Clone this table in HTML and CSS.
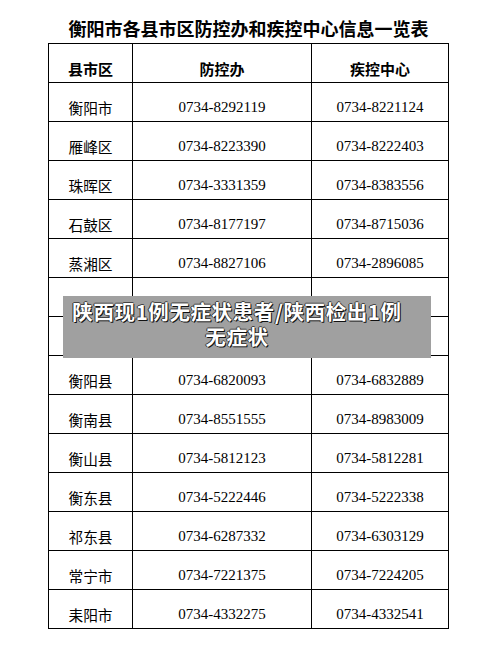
FILE: index.html
```html
<!DOCTYPE html>
<html lang="zh-CN">
<head>
<meta charset="utf-8">
<title>衡阳市各县市区防控办和疾控中心信息一览表</title>
<link rel="stylesheet" href="styles.css">
</head>
<body>
<main class="page">
  <h1 class="title">衡阳市各县市区防控办和疾控中心信息一览表</h1>
  <div class="sheet">
    <div class="grid">
      <div class="cell head">县市区</div><div class="cell head">防控办</div><div class="cell head">疾控中心</div>
      <div class="cell name">衡阳市</div><div class="cell num">0734-8292119</div><div class="cell num">0734-8221124</div>
      <div class="cell name">雁峰区</div><div class="cell num">0734-8223390</div><div class="cell num">0734-8222403</div>
      <div class="cell name">珠晖区</div><div class="cell num">0734-3331359</div><div class="cell num">0734-8383556</div>
      <div class="cell name">石鼓区</div><div class="cell num">0734-8177197</div><div class="cell num">0734-8715036</div>
      <div class="cell name">蒸湘区</div><div class="cell num">0734-8827106</div><div class="cell num">0734-2896085</div>
      <div class="cell name">南岳区</div><div class="cell num"></div><div class="cell num"></div>
      <div class="cell name"></div><div class="cell num"></div><div class="cell num"></div>
      <div class="cell name">衡阳县</div><div class="cell num">0734-6820093</div><div class="cell num">0734-6832889</div>
      <div class="cell name">衡南县</div><div class="cell num">0734-8551555</div><div class="cell num">0734-8983009</div>
      <div class="cell name">衡山县</div><div class="cell num">0734-5812123</div><div class="cell num">0734-5812281</div>
      <div class="cell name">衡东县</div><div class="cell num">0734-5222446</div><div class="cell num">0734-5222338</div>
      <div class="cell name">祁东县</div><div class="cell num">0734-6287332</div><div class="cell num">0734-6303129</div>
      <div class="cell name">常宁市</div><div class="cell num">0734-7221375</div><div class="cell num">0734-7224205</div>
      <div class="cell name">耒阳市</div><div class="cell num">0734-4332275</div><div class="cell num">0734-4332541</div>
    </div>
    <div class="banner">陕西现1例无症状患者/陕西检出1例<br>无症状</div>
  </div>
</main>
</body>
</html>
```

FILE: styles.css
```css
html, body {
  margin: 0;
  padding: 0;
  background: #ffffff;
}

.page {
  width: 497px;
  padding-top: 15px;
  font-family: "Noto Sans CJK SC", "Noto Sans", sans-serif;
  color: #000;
}

.title {
  margin: 0 0 2px;
  height: 26px;
  line-height: 26px;
  font-size: 18px;
  font-weight: 700;
  text-align: center;
}

.sheet {
  position: relative;
  width: 401px;
  margin: 0 auto;
}

.grid {
  display: grid;
  grid-template-columns: 84px 179px 137px;
  grid-auto-rows: 39px;
  border-top: 1px solid #000;
  border-left: 1px solid #000;
}

.cell {
  border-right: 1px solid #000;
  border-bottom: 1px solid #000;
  padding-top: 11px;
  display: flex;
  align-items: center;
  justify-content: center;
  white-space: nowrap;
}

.head {
  font-size: 15px;
  font-weight: 700;
}

.name {
  font-size: 14.7px;
}

.num {
  font-family: "Liberation Serif", "Times New Roman", serif;
  font-size: 15px;
}

.banner {
  position: absolute;
  left: 15px;
  top: 253px;
  width: 368px;
  height: 62px;
  box-sizing: border-box;
  padding: 3px 24px 0 4px;
  background: #a0a0a0;
  color: #fff;
  font-size: 20.5px;
  font-weight: 700;
  line-height: 25px;
  letter-spacing: 0.6px;
  text-align: center;
  white-space: nowrap;
  text-shadow: 1px 1px 0 #111, -1px 0 0 #333, 0 -1px 0 #444, 0 0 1px #000;
}
```
